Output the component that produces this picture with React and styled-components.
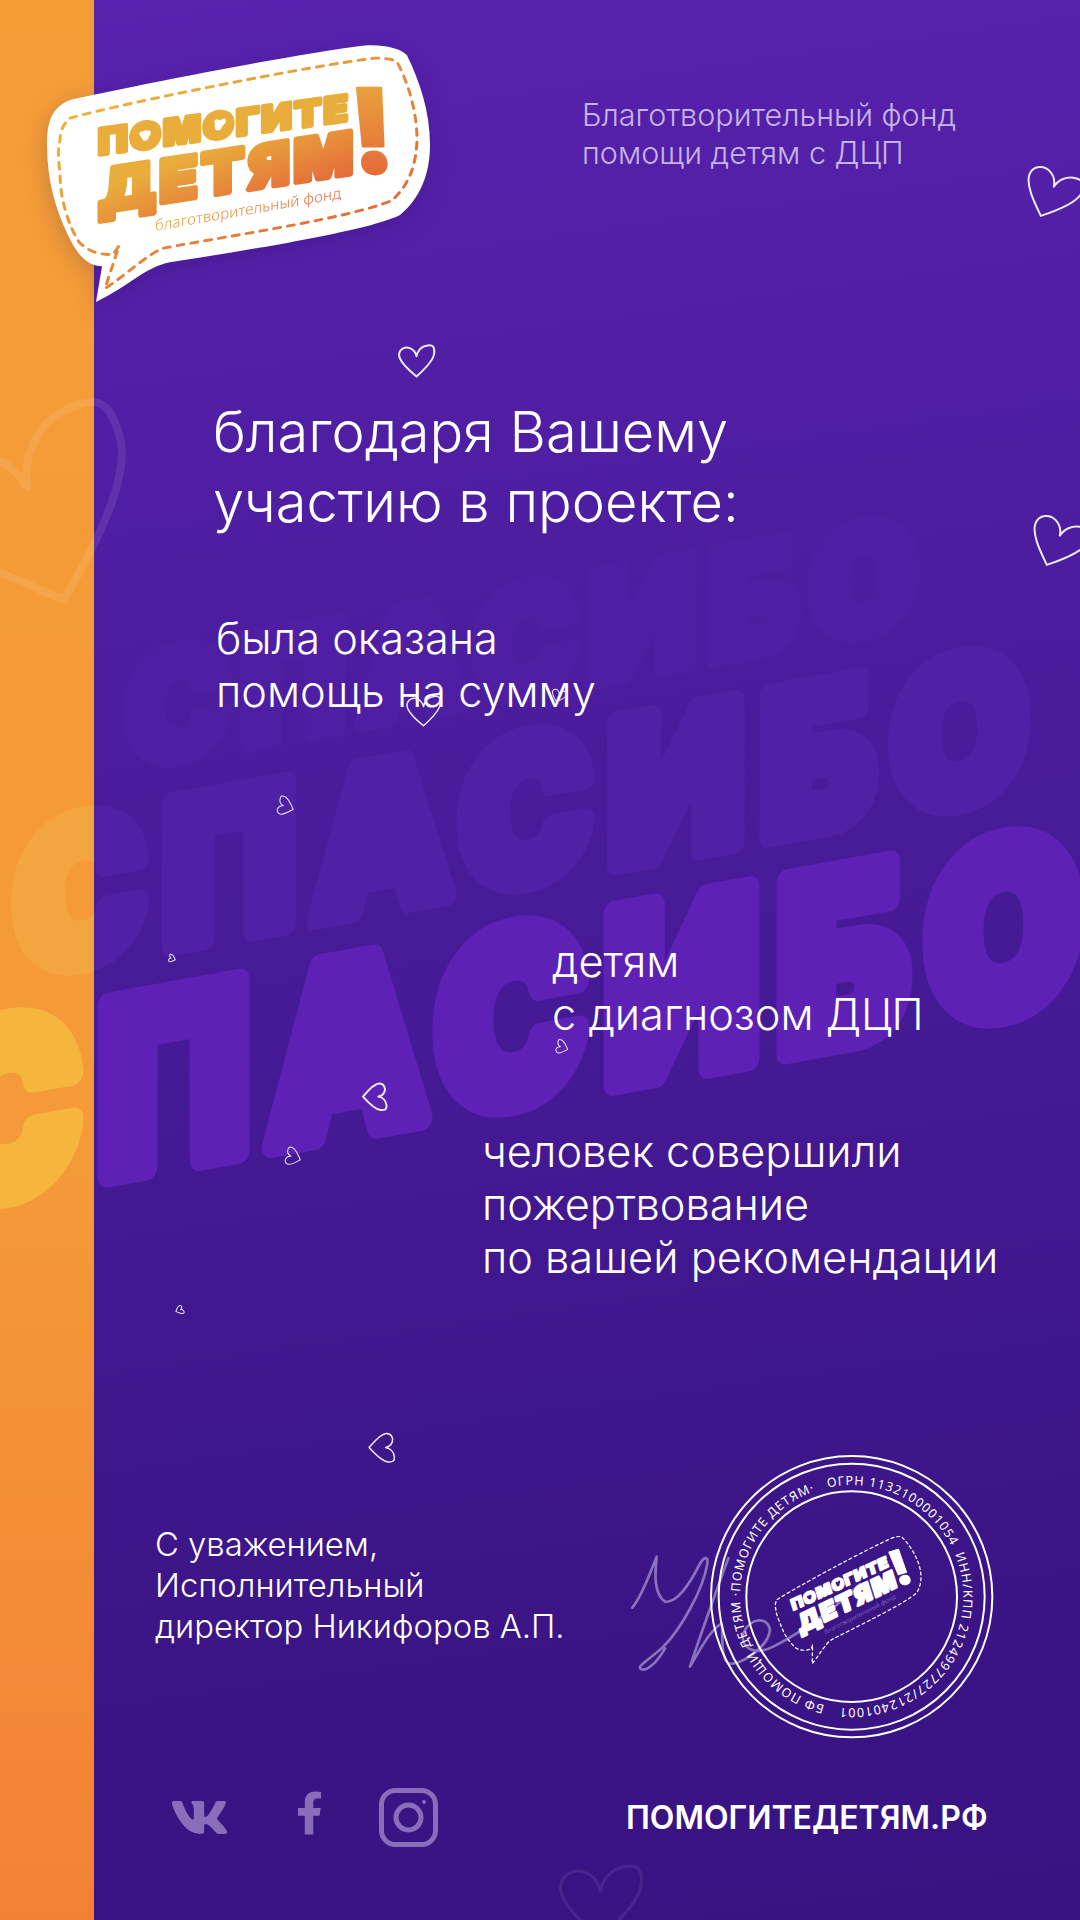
import React from "react";
import styled, { createGlobalStyle } from "styled-components";
import { FaVk, FaFacebookF } from "react-icons/fa";

const BODY_FONT = `"Inter", "Noto Sans", sans-serif`;

const GlobalStyle = createGlobalStyle`
  html, body {
    margin: 0;
    padding: 0;
    background: #3a1485;
  }
`;

const Page = styled.div`
  position: relative;
  display: flex;
  width: 1080px;
  height: 1920px;
  overflow: hidden;
  font-family: ${BODY_FONT};
  background: linear-gradient(172deg, #5822ae 0%, #4a1c9c 40%, #3a1485 85%, #381382 100%);
`;

const Sidebar = styled.aside`
  position: relative;
  flex: 0 0 94px;
  height: 1920px;
  overflow: hidden;
  background: linear-gradient(180deg, #f49d37 0%, #f49a38 60%, #f38135 100%);
`;

const Main = styled.main`
  position: relative;
  flex: 1;
  display: flex;
  flex-direction: column;
  padding-top: 96px;
`;

const WatermarkSvg = styled.svg`
  position: absolute;
  left: 0;
  top: 0;
  width: 1080px;
  height: 1920px;
`;

const WordmarkText = styled.text`
  font-family: "Inter", "Liberation Sans", sans-serif;
  font-weight: 900;
  stroke-linejoin: round;
  paint-order: stroke;
`;

const Tagline = styled.p`
  margin: 0 0 0 488px;
  font-size: 30.5px;
  line-height: 38px;
  font-weight: 300;
  color: #c7b4e8;
`;

const Heading = styled.h1`
  margin: 225px 0 0 119px;
  font-size: 56px;
  line-height: 70px;
  font-weight: 300;
  color: #fff;
`;

const Lead = styled.p`
  margin: ${({ $top }) => $top}px 0 0 ${({ $left }) => $left}px;
  font-size: 43.3px;
  line-height: 53px;
  font-weight: 300;
  color: #fff;
`;

const FooterRow = styled.div`
  display: flex;
  justify-content: space-between;
  align-items: flex-start;
  margin-top: 146px;
  padding: 0 60px 0 61px;
`;

const Signoff = styled.p`
  margin: 94px 0 0;
  font-size: 32.8px;
  line-height: 41px;
  font-weight: 300;
  color: #fff;
  white-space: nowrap;
`;

const StampSvg = styled.svg`
  flex: 0 0 420px;
  width: 420px;
  height: 330px;
`;

const BottomRow = styled.div`
  display: flex;
  align-items: center;
  margin-top: 28px;
  padding-left: 76px;
`;

const SocialLink = styled.span`
  display: flex;
  align-items: center;
  justify-content: center;
  box-sizing: border-box;
  width: ${({ $width }) => $width}px;
  height: 59px;
  margin-right: ${({ $gap }) => $gap}px;
  padding-bottom: ${({ $lift }) => $lift || 0}px;
  color: #8a6db8;
  font-size: ${({ $size }) => $size}px;
`;

const SiteUrl = styled.span`
  margin-left: 188px;
  font-size: 32px;
  line-height: 40px;
  font-weight: 600;
  color: #fff;
`;

const LogoSvg = styled.svg`
  position: absolute;
  left: 0;
  top: 0;
  width: 470px;
  height: 340px;
  filter: drop-shadow(0 6px 12px rgba(40, 10, 90, 0.22));
`;

const HeartSvg = styled.svg`
  position: absolute;
  left: ${({ $x }) => $x}px;
  top: ${({ $y }) => $y}px;
  width: ${({ $w }) => $w}px;
  height: ${({ $w }) => $w * 0.9}px;
  overflow: visible;
  transform: rotate(${({ $rot }) => $rot || 0}deg);
  path {
    fill: none;
    stroke: ${({ $color }) => $color || "#efe9f8"};
    stroke-width: ${({ $stroke }) => $stroke || 2}px;
    stroke-linejoin: round;
    vector-effect: non-scaling-stroke;
  }
`;

const HEART = "M50 88 C35 75 5 52 3 31 C2 13 20 6 32 11 C42 15 48 24 50 33 C52 20 62 6 80 4 C95 2 99 8 98 25 C96 45 70 70 50 88Z";

const Heart = (props) => (
  <HeartSvg viewBox="0 0 100 90" {...props}>
    <path d={HEART} />
  </HeartSvg>
);

const hearts = [
  { $x: 398, $y: 344, $w: 37 },
  { $x: 1022, $y: 167, $w: 58, $rot: 24 },
  { $x: 1028, $y: 516, $w: 58, $rot: 24 },
  { $x: 406, $y: 695, $w: 35, $stroke: 1.5 },
  { $x: 551, $y: 689, $w: 15, $rot: 20, $stroke: 1 },
  { $x: 276, $y: 798, $w: 19, $rot: -70, $stroke: 1 },
  { $x: 168, $y: 955, $w: 8, $rot: -70, $stroke: 1 },
  { $x: 361, $y: 1084, $w: 28, $rot: 90, $stroke: 2 },
  { $x: 284, $y: 1149, $w: 18, $rot: -70, $stroke: 1 },
  { $x: 555, $y: 1041, $w: 14, $rot: -70, $stroke: 1 },
  { $x: 175, $y: 1306, $w: 9, $rot: 70, $stroke: 1 },
  { $x: 367, $y: 1434, $w: 30, $rot: 90, $stroke: 1.5 },
];

const Watermark = ({ first, second, third }) => (
  <WatermarkSvg viewBox="0 0 1080 1920" aria-hidden="true">
    <WordmarkText
      transform="translate(125 768) skewY(-10.3)"
      fontSize="150"
      letterSpacing="12"
      textLength="804"
      lengthAdjust="spacingAndGlyphs"
      fill={third}
      stroke={third}
      strokeWidth="15"
    >
      СПАСИБО
    </WordmarkText>
    <WordmarkText
      transform="translate(14 975) skewY(-10.3)"
      fontSize="198"
      letterSpacing="18"
      textLength="1030"
      lengthAdjust="spacingAndGlyphs"
      fill={second}
      stroke={second}
      strokeWidth="20"
    >
      СПАСИБО
    </WordmarkText>
    <WordmarkText
      transform="translate(-70 1208) skewY(-10.3)"
      fontSize="235"
      letterSpacing="22"
      textLength="1170"
      lengthAdjust="spacingAndGlyphs"
      fill={first}
      stroke={first}
      strokeWidth="24"
    >
      СПАСИБО
    </WordmarkText>
  </WatermarkSvg>
);

const BUBBLE =
  "M71 103 C150 85 300 55 365 47 C385 46 400 50 407 57 C420 85 430 115 430 150 C430 180 420 205 400 222 C370 238 250 258 170 271 C145 276 130 295 96 312 L102 275 C85 275 75 258 68 243 C55 215 47 185 47 150 C47 125 52 110 71 103Z";
const BUBBLE_DASH =
  "M70 122 C130 105 310 68 375 60 C385 60 392 61 397 64 C408 85 417 115 417 145 C416 170 410 190 392 207 C350 225 250 240 165 256 C150 260 125 285 105 298 L119 254 L113 263 C103 263 90 262 79 250 C68 232 60 205 60 179 C58 165 58 150 60 145 C60 135 64 127 70 122Z";

const LogoMark = ({ bubble, dash, topInk, bigInk, bangInk, sub, heart }) => (
  <g>
    <g transform="scale(1 0.968)">
      {bubble && <path d={BUBBLE} fill={bubble} />}
      <path d={BUBBLE_DASH} fill="none" stroke={dash} strokeWidth="3" strokeDasharray="7 7" strokeLinecap="round" />
    </g>
    <WordmarkText
      transform="translate(98 155) skewY(-7.8)"
      fontSize="36"
      letterSpacing="2"
      textLength="252"
      lengthAdjust="spacingAndGlyphs"
      fill={topInk}
      stroke={topInk}
      strokeWidth="4"
    >
      ПОМОГИТЕ
    </WordmarkText>
    <path d={HEART} fill={heart} transform="translate(139 130) scale(0.12)" />
    <path d={HEART} fill={heart} transform="translate(214 118) scale(0.12)" />
    <WordmarkText
      transform="translate(99 212) skewY(-8.7)"
      fontSize="58"
      letterSpacing="4"
      textLength="258"
      lengthAdjust="spacingAndGlyphs"
      fill={bigInk}
      stroke={bigInk}
      strokeWidth="6"
    >
      ДЕТЯМ
    </WordmarkText>
    <WordmarkText transform="translate(375 173) skewX(4)" fontSize="117" textAnchor="middle" fill={bangInk} stroke={bangInk} strokeWidth="2">
      !
    </WordmarkText>
    <text
      transform="translate(155 231) skewY(-10)"
      fontFamily="'Noto Sans', sans-serif"
      fontWeight="300"
      fontSize="15"
      textLength="186"
      lengthAdjust="spacing"
      fill={sub}
    >
      благотворительный фонд
    </text>
  </g>
);

const SIGNATURE =
  "M97 533 C125 500 150 430 170 380 C165 430 160 490 195 515 C230 520 270 460 295 410 C310 380 325 375 322 400 C310 480 240 600 190 650 C160 680 115 705 120 715 C135 730 170 700 195 655 M385 385 C350 480 300 620 270 710 C300 660 330 600 365 580 C370 620 360 680 385 700 C420 710 505 650 510 600 C505 560 450 560 430 610 C420 650 460 680 520 650 C570 625 680 560 780 462";

const STAMP_TEXT = "БФ ПОМОЩИ ДЕТЯМ ·ПОМОГИТЕ ДЕТЯМ·\u00a0\u00a0 ОГРН 1132100001054 \u00a0ИНН/КПП 2124997727/212401001";

const Stamp = () => (
  <StampSvg viewBox="0 0 1260 990">
    <path d={SIGNATURE} fill="none" stroke="#8b72bd" strokeWidth="8" strokeLinecap="round" strokeLinejoin="round" />
    <g fill="none" stroke="#fff" strokeWidth="6">
      <circle cx="755" cy="500" r="422" />
      <circle cx="755" cy="500" r="399" />
      <circle cx="755" cy="500" r="316" />
    </g>
    <path id="stamp-ring" d="M755 835 A335 335 0 1 1 755 165 A335 335 0 1 1 755 835" fill="none" />
    <text transform="rotate(14 755 500)" fontFamily="'Noto Sans', sans-serif" fontSize="38" letterSpacing="3" fill="#fff">
      <textPath href="#stamp-ring" textLength="2060">
        {STAMP_TEXT}
      </textPath>
    </text>
    <g transform="translate(755 515) rotate(-17) scale(1.26) translate(-238 -175)">
      <LogoMark dash="#fff" topInk="#fff" bigInk="#fff" bangInk="#fff" sub="#9b85c9" heart="#3b1586" />
    </g>
  </StampSvg>
);

const InstagramIcon = () => (
  <svg width="59" height="59" viewBox="0 0 59 59" fill="none" stroke="#8a6db8">
    <rect x="2.5" y="2.5" width="54" height="54" rx="14" strokeWidth="5" />
    <circle cx="29.5" cy="29.5" r="12.5" strokeWidth="5" />
    <circle cx="45" cy="14" r="2" fill="#8a6db8" strokeWidth="0" />
  </svg>
);

const App = () => (
  <>
    <GlobalStyle />
    <Page>
      <Watermark first="#5e21b6" second="#5020a5" third="#4f1fa3" />
      <Sidebar>
        <Watermark first="#f6b63e" second="#f3a63f" third="#f49d37" />
      </Sidebar>
      <Main>
        <Tagline>
          Благотворительный фонд
          <br />
          помощи детям с ДЦП
        </Tagline>
        <Heading>
          благодаря Вашему
          <br />
          участию в проекте:
        </Heading>
        <Lead $top={75} $left={122}>
          была оказана
          <br />
          помощь на сумму
        </Lead>
        <Lead $top={217} $left={458}>
          детям
          <br />
          с диагнозом ДЦП
        </Lead>
        <Lead $top={84} $left={388}>
          человек совершили
          <br />
          пожертвование
          <br />
          по вашей рекомендации
        </Lead>
        <FooterRow>
          <Signoff>
            С уважением,
            <br />
            Исполнительный
            <br />
            директор Никифоров А.П.
          </Signoff>
          <Stamp />
        </FooterRow>
        <BottomRow>
          <SocialLink $width={59} $gap={67} $size={63}>
            <FaVk />
          </SocialLink>
          <SocialLink $width={27} $gap={56} $size={50} $lift={10}>
            <FaFacebookF />
          </SocialLink>
          <SocialLink $width={59} $gap={0}>
            <InstagramIcon />
          </SocialLink>
          <SiteUrl>ПОМОГИТЕДЕТЯМ.РФ</SiteUrl>
        </BottomRow>
      </Main>
      <LogoSvg viewBox="0 0 470 340">
        <defs>
          <linearGradient id="logo-big" x1="0.35" y1="0.2" x2="1" y2="0.95">
            <stop offset="0" stopColor="#e9ad3b" />
            <stop offset="1" stopColor="#e4623a" />
          </linearGradient>
          <linearGradient id="logo-bang" x1="0" y1="0.1" x2="0" y2="0.9">
            <stop offset="0" stopColor="#e9a83b" />
            <stop offset="1" stopColor="#e4643a" />
          </linearGradient>
          <linearGradient id="logo-sub" x1="0" y1="0" x2="1" y2="0">
            <stop offset="0" stopColor="#e9a63b" />
            <stop offset="1" stopColor="#e4683a" />
          </linearGradient>
          <linearGradient id="logo-dash" gradientUnits="userSpaceOnUse" x1="200" y1="60" x2="330" y2="280">
            <stop offset="0" stopColor="#ecb03c" />
            <stop offset="1" stopColor="#e4623a" />
          </linearGradient>
        </defs>
        <LogoMark
          bubble="#fff"
          dash="url(#logo-dash)"
          topInk="#e9ad3b"
          bigInk="url(#logo-big)"
          bangInk="url(#logo-bang)"
          sub="url(#logo-sub)"
          heart="#fff"
        />
      </LogoSvg>
      {hearts.map((heart, i) => (
        <Heart key={i} {...heart} />
      ))}
      <Heart $x={-72} $y={415} $w={215} $rot={-18} $stroke={8} $color="rgba(255,255,255,0.09)" />
      <Heart $x={558} $y={1863} $w={85} $stroke={3} $color="rgba(255,255,255,0.08)" />
    </Page>
  </>
);

export default App;
